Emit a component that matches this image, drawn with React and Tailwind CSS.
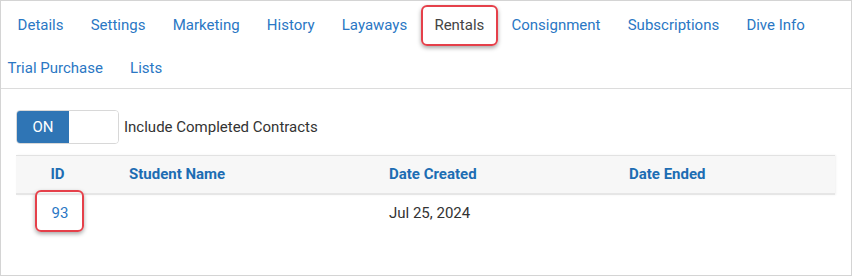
import React from "react";

const row1 = ["Details", "Settings", "Marketing", "History", "Layaways", "Rentals", "Consignment", "Subscriptions", "Dive Info"];
const row2 = ["Trial Purchase", "Lists"];

function Tab({ label }) {
  if (label === "Rentals") {
    return (
      <div className="px-[13.6px] py-[11px] text-[#444]">
        <span className="relative inline-block">
          <span className="absolute left-[-13px] right-[-14px] top-[-10px] bottom-[-11px] rounded-[6px] border-[2.5px] border-[#e5404a] shadow-[0_2px_4px_rgba(0,0,0,0.35)]" />
          <span className="relative">{label}</span>
        </span>
      </div>
    );
  }
  return <div className="px-[13.6px] py-[11px] text-[#2a77c4]">{label}</div>;
}

export default function App() {
  return (
    <div
      className="w-[852px] h-[276px] bg-white border border-[#d4d4d4] box-border overflow-hidden"
      style={{ fontFamily: "Roboto, 'Noto Sans', Arial, sans-serif" }}
    >
      <div className="border-b border-[#dcdcdc] h-[88px] text-[15px] leading-[20px]">
        <div className="flex pl-[3px] pt-[3px]">
          {row1.map((t) => (
            <Tab key={t} label={t} />
          ))}
        </div>
        <div className="flex mt-[1px] ml-[-7px]">
          {row2.map((t) => (
            <Tab key={t} label={t} />
          ))}
        </div>
      </div>

      <div className="pl-[15px] pr-[16px]">
        <div className="flex items-center mt-[21px] h-[34px]">
          <div className="flex w-[103px] h-[34px] rounded-[4px] border border-[#d8d8d8] overflow-hidden">
            <div className="w-[52px] bg-[#2f75b5] text-white text-[15px] flex items-center justify-center">ON</div>
            <div className="flex-1 bg-white" />
          </div>
          <span className="ml-[5px] text-[15px] text-[#333]">Include Completed Contracts</span>
        </div>

        <div className="mt-[11px] w-[819px]">
          <div className="flex h-[40px] items-center bg-[#f7f7f7] border-t border-[#e2e2e2] border-b-2 border-b-[#e6e6e6] text-[15px] font-bold text-[#1d6db3] shadow-[1px_0_2px_rgba(0,0,0,0.06)]">
            <div className="w-[83px] text-center">ID</div>
            <div className="w-[259px] pl-[30px]">Student Name</div>
            <div className="w-[240px] pl-[31px]">Date Created</div>
            <div className="pl-[31px]">Date Ended</div>
          </div>
          <div className="flex h-[37px] items-center text-[15px] text-[#333]">
            <div className="w-[88px] flex justify-center">
              <span className="relative text-[#2a77c4]">
                <span className="absolute left-[-17px] right-[-16px] top-[-12px] bottom-[-7px] rounded-[6px] border-[2.5px] border-[#e5404a] shadow-[0_2px_4px_rgba(0,0,0,0.35)]" />
                <span className="relative">93</span>
              </span>
            </div>
            <div className="w-[285px]" />
            <div>Jul 25, 2024</div>
          </div>
        </div>
      </div>
    </div>
  );
}
